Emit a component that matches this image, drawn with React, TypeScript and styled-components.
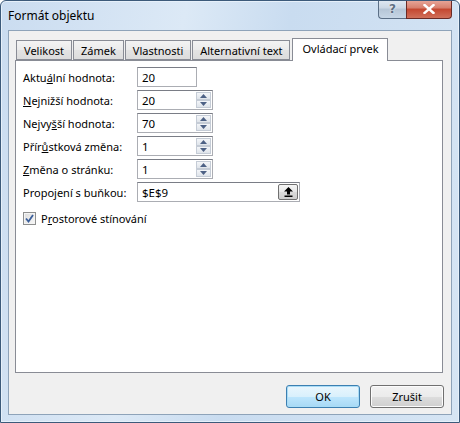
import React, { useState } from 'react';
import styled, { createGlobalStyle } from 'styled-components';

const GlobalStyle = createGlobalStyle`
  html, body {
    margin: 0;
    padding: 0;
    background: #ffffff;
  }
  body {
    font-family: 'Noto Sans', 'Open Sans', sans-serif;
    font-size: 11.5px;
    color: #000;
  }
`;

const tabs = ['Velikost', 'Zámek', 'Vlastnosti', 'Alternativní text', 'Ovládací prvek'];

type Row = {
  pre: string;
  key: string;
  post: string;
  value: string;
  spin: boolean;
};

const rows: Row[] = [
  { pre: 'Aktu', key: 'á', post: 'lní hodnota:', value: '20', spin: false },
  { pre: '', key: 'N', post: 'ejnižší hodnota:', value: '20', spin: true },
  { pre: 'Nejvy', key: 'š', post: 'ší hodnota:', value: '70', spin: true },
  { pre: 'Přír', key: 'ů', post: 'stková změna:', value: '1', spin: true },
  { pre: '', key: 'Z', post: 'měna o stránku:', value: '1', spin: true },
];

const App: React.FC = () => {
  const [active, setActive] = useState(4);
  const [shading, setShading] = useState(true);

  return (
    <>
      <GlobalStyle />
      <Window>
        <TitleBar>
          <Title>Formát objektu</Title>
          <Caption>
            <HelpBtn>?</HelpBtn>
            <CloseBtn>
              <svg width="12" height="10" viewBox="0 0 12 10">
                <path d="M1.5 1 L10.5 9 M10.5 1 L1.5 9" stroke="#fff" strokeWidth="2.4" strokeLinecap="square" />
              </svg>
            </CloseBtn>
          </Caption>
        </TitleBar>
        <Client>
          <TabStrip>
            {tabs.map((t, i) => (
              <Tab key={t} $active={i === active} onClick={() => setActive(i)}>
                {t}
              </Tab>
            ))}
          </TabStrip>
          <Panel>
            <Form>
              {rows.map((r) => (
                <FieldRow key={r.post}>
                  <Label>
                    {r.pre}
                    <u>{r.key}</u>
                    {r.post}
                  </Label>
                  <Field $w={r.spin ? 76 : 60}>
                    <Value>{r.value}</Value>
                    {r.spin && (
                      <Spin>
                        <SpinHalf>
                          <svg width="7" height="4" viewBox="0 0 7 4">
                            <path d="M0 4 L3.5 0 L7 4 Z" fill="#4d6185" />
                          </svg>
                        </SpinHalf>
                        <SpinHalf>
                          <svg width="7" height="4" viewBox="0 0 7 4">
                            <path d="M0 0 L3.5 4 L7 0 Z" fill="#4d6185" />
                          </svg>
                        </SpinHalf>
                      </Spin>
                    )}
                  </Field>
                </FieldRow>
              ))}
              <FieldRow>
                <Label>
                  Propo<u>j</u>ení s buňkou:
                </Label>
                <Field $w={163}>
                  <Value>$E$9</Value>
                  <RefBtn>
                    <svg width="9" height="10" viewBox="0 0 9 10">
                      <path d="M4.5 0 L9 4.5 L6 4.5 L6 7.5 L3 7.5 L3 4.5 L0 4.5 Z" fill="#000" />
                      <rect x="0.5" y="8.5" width="8" height="1.5" fill="#000" />
                    </svg>
                  </RefBtn>
                </Field>
              </FieldRow>
              <CheckRow onClick={() => setShading(!shading)}>
                <CheckBox>
                  {shading && (
                    <svg width="9" height="9" viewBox="0 0 9 9">
                      <path d="M1 4.5 L3.5 7.5 L8 1" fill="none" stroke="#3b5f9b" strokeWidth="1.8" />
                    </svg>
                  )}
                </CheckBox>
                <span>
                  P<u>r</u>ostorové stínování
                </span>
              </CheckRow>
            </Form>
          </Panel>
          <Buttons>
            <Button $primary>OK</Button>
            <Button>Zrušit</Button>
          </Buttons>
        </Client>
      </Window>
    </>
  );
};

const Window = styled.div`
  width: 460px;
  height: 423px;
  box-sizing: border-box;
  border: 1px solid #3c5a7a;
  border-radius: 6px 6px 0 0;
  background: linear-gradient(100deg, #cadcf0 0%, #dce9f6 35%, #c9dcf0 55%, #d6e5f4 100%);
  box-shadow: inset 0 0 0 1px #e6f0fa;
  display: flex;
  flex-direction: column;
  overflow: hidden;
`;

const TitleBar = styled.div`
  height: 29px;
  display: flex;
  align-items: flex-start;
  justify-content: space-between;
  padding: 0 7px 0 7px;
  flex-shrink: 0;
`;

const Title = styled.div`
  margin-top: 6px;
  font-size: 12px;
  color: #000;
`;

const Caption = styled.div`
  display: flex;
  margin-top: -1px;
`;

const CapBtn = styled.div`
  height: 19px;
  box-sizing: border-box;
  display: flex;
  align-items: center;
  justify-content: center;
  border: 1px solid #5b6f86;
  border-top: none;
`;

const HelpBtn = styled(CapBtn)`
  width: 28px;
  border-radius: 0 0 0 4px;
  border-right: none;
  background: linear-gradient(#e1e9f2 0%, #cbd7e4 45%, #b5c5d6 50%, #c6d6e6 100%);
  color: #5e6f82;
  font-family: 'DejaVu Sans', sans-serif;
  font-weight: bold;
  font-size: 12px;
  text-shadow: 0 0 2px #fff;
`;

const CloseBtn = styled(CapBtn)`
  width: 46px;
  border-radius: 0 0 4px 0;
  border-color: #6a2a25;
  background: linear-gradient(#e9a99c 0%, #d77e6c 45%, #c4462f 50%, #d0705a 100%);
`;

const Client = styled.div`
  flex: 1;
  margin: 0 7px 7px 7px;
  border: 1px solid #8ea3b9;
  background: #f0f0f0;
  display: flex;
  flex-direction: column;
  padding: 7px 7px 0 6px;
`;

const TabStrip = styled.div`
  display: flex;
  align-items: flex-end;
  height: 22px;
  padding-left: 1px;
  position: relative;
  z-index: 1;
`;

const Tab = styled.div<{ $active?: boolean }>`
  box-sizing: border-box;
  height: ${(p) => (p.$active ? 23 : 20)}px;
  margin-bottom: ${(p) => (p.$active ? -1 : 0)}px;
  margin-left: ${(p) => (p.$active ? 1 : 0)}px;
  margin-right: 1px;
  padding: ${(p) => (p.$active ? '2px 8px 0 9px' : '2px 7px 0 7px')};
  font-size: 11px;
  border: 1px solid #898c95;
  border-bottom: ${(p) => (p.$active ? 'none' : '1px solid #898c95')};
  background: ${(p) => (p.$active ? '#ffffff' : 'linear-gradient(#f3f3f3, #ebebeb 50%, #e3e3e3 51%, #dcdcdc)')};
  display: flex;
  align-items: flex-start;
  white-space: nowrap;
  cursor: default;
`;

const Panel = styled.div`
  height: 313px;
  box-sizing: border-box;
  border: 1px solid #898c95;
  background: #ffffff;
  margin-right: 1px;
`;

const Form = styled.div`
  display: flex;
  flex-direction: column;
  gap: 3px;
  padding: 6px 0 0 7px;
`;

const FieldRow = styled.div`
  display: flex;
  align-items: center;
  height: 20px;
`;

const Label = styled.div`
  width: 114px;
  flex-shrink: 0;
  white-space: nowrap;
  font-size: 11px;
`;

const Field = styled.div<{ $w: number }>`
  width: ${(p) => p.$w}px;
  height: 20px;
  box-sizing: border-box;
  border: 1px solid #abadb3;
  border-top-color: #7a7d86;
  background: #fff;
  display: flex;
  align-items: center;
  justify-content: space-between;
  padding: 0 1px 0 4px;
`;

const Value = styled.span`
  font-size: 11.5px;
`;

const Spin = styled.div`
  width: 15px;
  height: 16px;
  display: flex;
  flex-direction: column;
  gap: 0;
`;

const SpinHalf = styled.div`
  flex: 1;
  box-sizing: border-box;
  border: 1px solid #c5ccd6;
  background: linear-gradient(#f4f6f9, #dfe4ea);
  display: flex;
  align-items: center;
  justify-content: center;
`;

const RefBtn = styled.div`
  width: 20px;
  height: 16px;
  box-sizing: border-box;
  border: 1px solid #707070;
  border-radius: 2px;
  background: linear-gradient(#f6f6f6, #e6e6e6 50%, #dadada 51%, #cfcfcf);
  display: flex;
  align-items: center;
  justify-content: center;
`;

const CheckRow = styled.div`
  display: flex;
  align-items: center;
  gap: 5px;
  margin-top: 4px;
  height: 18px;
  font-size: 11px;
  cursor: default;
`;

const CheckBox = styled.div`
  width: 13px;
  height: 13px;
  box-sizing: border-box;
  border: 1px solid #8e8f8f;
  background: linear-gradient(135deg, #dcdcdc, #f8f8f8);
  box-shadow: inset 0 0 0 1px #f4f4f4;
  display: flex;
  align-items: center;
  justify-content: center;
`;

const Buttons = styled.div`
  display: flex;
  justify-content: flex-end;
  gap: 10px;
  padding: 12px 0 0 0;
`;

const Button = styled.div<{ $primary?: boolean }>`
  width: 74px;
  height: 23px;
  box-sizing: border-box;
  border: 1px solid ${(p) => (p.$primary ? '#3c7fb1' : '#707070')};
  border-radius: 3px;
  background: ${(p) =>
    p.$primary
      ? 'linear-gradient(#eaf6fd, #d9f0fc 50%, #bee6fd 51%, #a7d9f5)'
      : 'linear-gradient(#f2f2f2, #ebebeb 50%, #dddddd 51%, #cfcfcf)'};
  box-shadow: inset 0 0 0 1px ${(p) => (p.$primary ? '#a9dcf6' : '#fcfcfc')};
  display: flex;
  align-items: center;
  justify-content: center;
  font-size: 11px;
  cursor: default;
`;

export default App;
